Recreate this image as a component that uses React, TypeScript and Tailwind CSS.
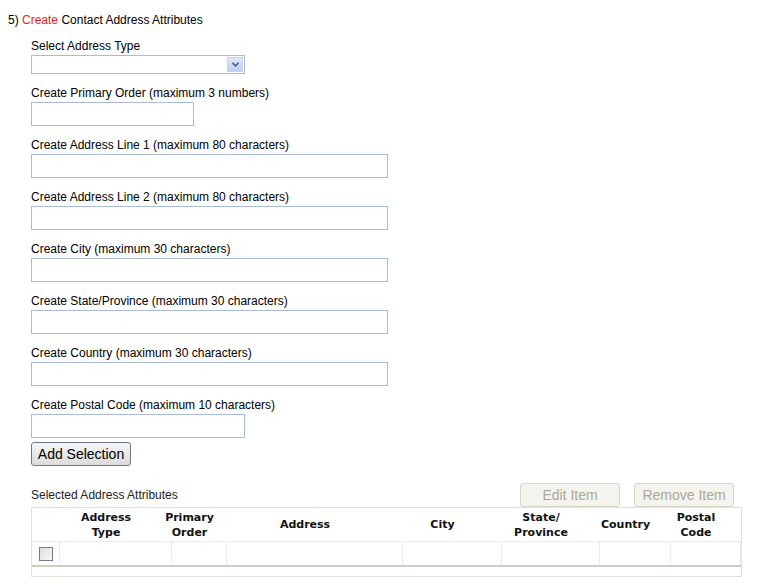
import React from 'react';

const fields = [
  { label: 'Create Address Line 1 (maximum 80 characters)', w: 'w-[357px]' },
  { label: 'Create Address Line 2 (maximum 80 characters)', w: 'w-[357px]' },
  { label: 'Create City (maximum 30 characters)', w: 'w-[357px]' },
  { label: 'Create State/Province (maximum 30 characters)', w: 'w-[357px]' },
  { label: 'Create Country (maximum 30 characters)', w: 'w-[357px]' },
];

const columns = [
  { key: 'check', title: [] as string[] },
  { key: 'type', title: ['Address', 'Type'] },
  { key: 'order', title: ['Primary', 'Order'] },
  { key: 'address', title: ['Address'] },
  { key: 'city', title: ['City'] },
  { key: 'state', title: ['State/', 'Province'] },
  { key: 'country', title: ['Country'] },
  { key: 'postal', title: ['Postal', 'Code'] },
];

const gridCols = 'grid grid-cols-[28px_112px_55px_176px_99px_98px_71px_70px]';

function TextBox({ w }: { w: string }) {
  return <div className={`mt-[1px] h-[24px] ${w} border border-[#a9bcd6] bg-white`} />;
}

function Field({ label, w }: { label: string; w: string }) {
  return (
    <div className="pt-[12px]">
      <div className="leading-[15px]">{label}</div>
      <TextBox w={w} />
    </div>
  );
}

export default function App() {
  return (
    <div
      className="w-[758px] h-[587px] bg-white text-[12px] text-black overflow-hidden pt-[13px] pl-[8px]"
      style={{ fontFamily: '"Liberation Sans", Arial, sans-serif' }}
    >
      <div className="leading-[14px]">
        5) <span className="text-[#ee1c1c]">Create</span> Contact Address Attributes
      </div>

      <div className="pl-[23px]">
        <div className="pt-[12px]">
          <div className="leading-[15px]">Select Address Type</div>
          <div className="mt-[1px] h-[19px] w-[214px] border border-[#a9bcd6] bg-white flex justify-end p-[1px]">
            <div className="w-[16px] h-full bg-gradient-to-b from-[#dfe8fb] to-[#bccdf3] border border-[#c5d3f0] flex items-center justify-center">
              <svg width="7" height="5" viewBox="0 0 7 5">
                <path d="M0.5 0.8 L3.5 3.8 L6.5 0.8" fill="none" stroke="#4d6185" strokeWidth="1.6" />
              </svg>
            </div>
          </div>
        </div>

        <Field label="Create Primary Order (maximum 3 numbers)" w="w-[163px]" />
        {fields.map((f) => (
          <Field key={f.label} label={f.label} w={f.w} />
        ))}
        <div className="pt-[12px]">
          <div className="leading-[15px]">Create Postal Code (maximum 10 characters)</div>
          <TextBox w="w-[214px]" />
        </div>

        <button className="mt-[4px] h-[24px] w-[100px] rounded-[3px] border border-[#707782] bg-gradient-to-b from-[#f6f6f6] to-[#dcdcdc] text-[14px] leading-none text-black">
          Add Selection
        </button>

        <div className="mt-[17px] w-[711px] flex items-center justify-between">
          <span className="text-[#222]">Selected Address Attributes</span>
          <div className="flex gap-[14px] pr-[8px]">
            <button className="h-[24px] w-[100px] rounded-[3px] border border-[#d9d6c8] bg-[#f4f3ee] text-[14px] text-[#aca899]">
              Edit Item
            </button>
            <button className="h-[24px] w-[100px] rounded-[3px] border border-[#d9d6c8] bg-[#f4f3ee] text-[14px] text-[#aca899]">
              Remove Item
            </button>
          </div>
        </div>

        <div className="w-[711px] h-[70px] border border-[#e2e0d6] bg-white">
          <div
            className={`${gridCols} h-[33px] text-[11px] font-bold leading-[15px] text-[#111]`}
            style={{ fontFamily: '"DejaVu Sans", Verdana, sans-serif' }}
          >
            {columns.map((c) => (
              <div key={c.key} className="flex flex-col items-center justify-center pr-[20px] text-center">
                {c.title.map((t) => (
                  <span key={t}>{t}</span>
                ))}
              </div>
            ))}
          </div>
          <div className={`${gridCols} h-[26px] border-t border-[#ecebe4] border-b-2 border-b-[#cfcdc4]`}>
            {columns.map((c) => (
              <div key={c.key} className="border-r border-[#ecebe4] flex items-center justify-center">
                {c.key === 'check' && (
                  <div className="w-[14px] h-[14px] border border-[#6e7d94] bg-gradient-to-br from-[#dcdcd8] to-[#f8f8f6]" />
                )}
              </div>
            ))}
          </div>
        </div>
      </div>
    </div>
  );
}
